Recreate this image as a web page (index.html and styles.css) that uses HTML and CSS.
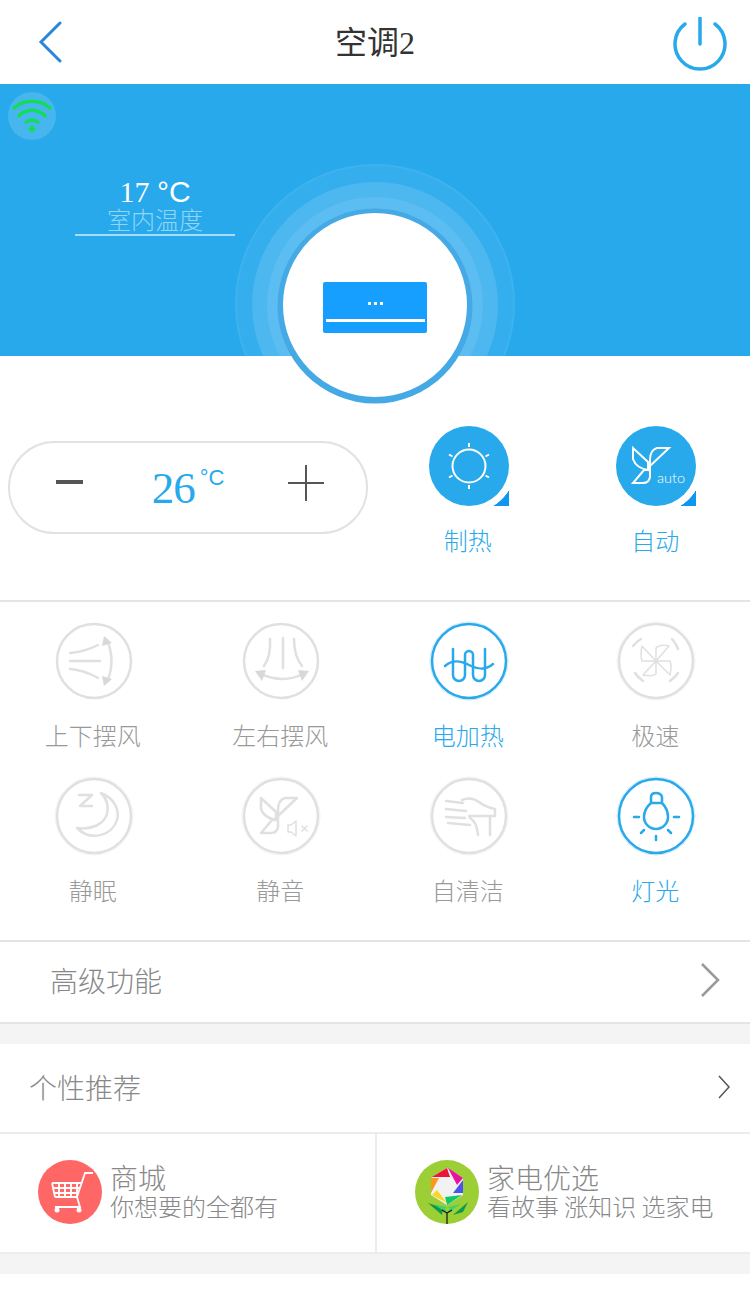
FILE: index.html
```html
<!DOCTYPE html>
<html lang="en">
<head>
  <meta charset="UTF-8">
  <title>空调2</title>
  <link rel="stylesheet" href="styles.css">
</head>
<body>
  <header class="topbar">
    <svg class="back" viewBox="0 0 24 44"><path d="M22 3 3 22l19 19"/></svg>
    <h1>空调<span class="num">2</span></h1>
    <svg class="power" viewBox="0 0 54 54"><path d="M12 7A25 25 0 1 0 42 7M27 1v26"/></svg>
  </header>

  <section class="hero">
    <div class="rings">
      <div class="ring ring-1"></div>
      <div class="ring ring-2"></div>
      <div class="ring ring-3"></div>
    </div>
    <div class="wifi">
      <svg viewBox="0 0 48 48"><path d="M5 17a27 27 0 0 1 38 0M10 25a18 18 0 0 1 28 0M17 31a10 10 0 0 1 14 0"/><path class="wifi-dot" d="m24 33 4 4-4 4-4-4z"/></svg>
    </div>
    <div class="indoor">
      <div class="indoor-temp">17 <span class="deg">°C</span></div>
      <div class="indoor-label">室内温度</div>
    </div>
    <div class="dial">
      <div class="unit">
        <div class="unit-dots"><i></i><i></i><i></i></div>
        <div class="unit-slot"></div>
      </div>
    </div>
  </section>

  <section class="controls">
    <div class="stepper">
      <span class="minus"></span>
      <div class="set-temp">26<sup>°C</sup></div>
      <span class="plus"></span>
    </div>
    <div class="mode">
      <div class="mode-btn">
        <svg viewBox="0 0 80 80">
          <circle class="line" cx="40" cy="40" r="16.5"/>
          <path class="line" d="M40 17v4M40 59v4M20 28.500l3.500 2M56.500 49.500l3.500 2M20 51.500l3.500-2M56.500 30.500l3.500-2"/>
        </svg>
      </div>
      <div class="mode-label">制热</div>
    </div>
    <div class="mode">
      <div class="mode-btn">
        <svg viewBox="0 0 80 80">
          <path class="line" d="M17 22v11q3 9 15 11V36zM53 22H41q-7 2-7 12v6zM34 34v17q-1 6-7 6H17l11-13h4"/>
          <text class="auto" x="41" y="57">auto</text>
        </svg>
      </div>
      <div class="mode-label">自动</div>
    </div>
  </section>

  <section class="features">
    <div class="feature">
      <svg viewBox="0 0 80 80">
        <circle cx="40" cy="40" r="37"/>
        <path d="M16 32q14-1 28-8M16 40h30M16 48q14 1 28 9M53 19q9 21 0 42"/>
        <path class="solid" d="m50 15 8 7-10 3zM50 65l8-7-10-3z"/>
      </svg>
      <div class="feature-label">上下摆风</div>
    </div>
    <div class="feature">
      <svg viewBox="0 0 80 80">
        <circle cx="40" cy="40" r="37"/>
        <path d="M42 17v30M29 18q1 17-6 27M53 18q0 17 8 27M20 53q22 10 42 0"/>
        <path class="solid" d="m14 50 11-1-4 11zM68 50l-11-1 4 11z"/>
      </svg>
      <div class="feature-label">左右摆风</div>
    </div>
    <div class="feature on">
      <svg viewBox="0 0 80 80">
        <circle class="halo" cx="40" cy="40" r="39"/>
        <circle cx="40" cy="40" r="37"/>
        <path d="M24 28v26a6 6 0 0 0 12 0V34a4 4 0 0 1 8 0v20a6 6 0 0 0 12 0V28M16 45c8-7 16-5 24-1s16 6 24-1"/>
      </svg>
      <div class="feature-label">电加热</div>
    </div>
    <div class="feature">
      <svg viewBox="0 0 80 80">
        <circle class="halo" cx="40" cy="40" r="39"/>
        <circle cx="40" cy="40" r="37"/>
        <path d="M17 25a28 28 0 0 1 8-7M56 18a28 28 0 0 1 6 10M19 52a28 28 0 0 0 8 8M62 52a28 28 0 0 1-8 8"/>
        <path class="thin" d="M40 40 26 25q-2 9 0 15zM40 40l13-15q-9-2-13 2zM40 40l14 14q2-9 0-14zM40 40 27 54q9 2 13-1z"/>
      </svg>
      <div class="feature-label">极速</div>
    </div>
    <div class="feature">
      <svg viewBox="0 0 80 80">
        <circle class="halo" cx="40" cy="40" r="39"/>
        <circle cx="40" cy="40" r="37"/>
        <path d="M47 17c13 5 19 17 16 27-4 14-25 23-40 8 15 2 27-4 30-14 2-8 0-15-6-21zM25 19h13L26 30h12"/>
      </svg>
      <div class="feature-label">静眠</div>
    </div>
    <div class="feature">
      <svg viewBox="0 0 80 80">
        <circle class="halo" cx="40" cy="40" r="39"/>
        <circle cx="40" cy="40" r="37"/>
        <path d="M20 22v11q3 9 15 11V36zM56 22H44q-7 2-7 12v6zM37 34v17q-1 6-7 6H20l11-13h4"/>
        <path class="thin" d="M47 49h3l5-4v15l-5-4h-3zM61 50l5 5m0-5-5 5"/>
      </svg>
      <div class="feature-label">静音</div>
    </div>
    <div class="feature">
      <svg viewBox="0 0 80 80">
        <circle class="halo" cx="40" cy="40" r="39"/>
        <circle cx="40" cy="40" r="37"/>
        <path d="M17 25l17 2M17 33l20 2M17 41l19 1M19 47l22 2M33 24q9-4 17 2 6 5 16 7v7H40M61 41v18M41 42q7 4 8 17"/>
      </svg>
      <div class="feature-label">自清洁</div>
    </div>
    <div class="feature on">
      <svg viewBox="0 0 80 80">
        <circle class="halo" cx="40" cy="40" r="39"/>
        <circle cx="40" cy="40" r="37"/>
        <path d="M35 27v-6q0-4 5-4t6 4v6M35 27h11M35 27q-7 6-7 14a12 12 0 0 0 24 0q0-8-6-14M18 41h5M58 41h5M25 57l3-3M52 54l3 3M40 60v4"/>
      </svg>
      <div class="feature-label">灯光</div>
    </div>
  </section>

  <div class="advanced">
    <span>高级功能</span>
    <svg class="chevron" viewBox="0 0 20 36"><path d="m2 2 16 16L2 34"/></svg>
  </div>

  <div class="band"></div>

  <div class="recommend">
    <span>个性推荐</span>
    <svg class="chevron small" viewBox="0 0 14 24"><path d="m2 1 10 11L2 23"/></svg>
  </div>

  <section class="links">
    <div class="link">
      <svg class="link-icon" viewBox="0 0 64 64">
        <circle class="cart-bg" cx="32" cy="32" r="32"/>
        <path class="cart" d="M55 13h-8l-8 24 3 10H17M14 23h29M17 37h23M14 23l3 14M21 23v14M27 23v14M33 23v14M39 23v14M15 28h27M16 33h25"/>
        <circle class="cart-wheel" cx="19" cy="50" r="2.500"/>
        <circle class="cart-wheel" cx="41" cy="50" r="2.500"/>
      </svg>
      <div class="link-text">
        <div class="link-title">商城</div>
        <div class="link-sub">你想要的全都有</div>
      </div>
    </div>
    <div class="link">
      <svg class="link-icon" viewBox="0 0 64 64">
        <circle fill="#9ccf35" cx="32" cy="32" r="32"/>
        <path fill="#f2f2f2" d="m32 8 16 10v17l-16 10-16-10V18z"/>
        <path fill="#f0123c" d="m17 17 15-9 3 9z"/>
        <path fill="#e912a0" d="m33 8 15 10-6 7z"/>
        <path fill="#4a55f0" d="M48 20v13H38z"/>
        <path fill="#10c86a" d="m30 37 17-2-15 10z"/>
        <path fill="#f8d820" d="m22 30 10 13-15-8z"/>
        <path fill="#f89a20" d="M16 18h8l-8 15z"/>
        <path fill="#0f9a48" d="m13 43 15 5-1 7z"/>
        <path fill="#0f9a48" d="m53 42-15 13 10-3z"/>
        <path fill="#3fd070" d="m18 44 14 9 3-5zM46 44l-14 9-2-5z"/>
        <path class="stem" d="M32 64V53l-5-3m5 3 5-3"/>
      </svg>
      <div class="link-text">
        <div class="link-title">家电优选</div>
        <div class="link-sub">看故事 涨知识 选家电</div>
      </div>
    </div>
  </section>

  <div class="band"></div>
</body>
</html>
```

FILE: styles.css
```css
body {
  margin: 0;
  background: #fff;
  font-family: "Noto Sans CJK SC", "Noto Sans", sans-serif;
  font-weight: 300;
  overflow: hidden;
}

svg {
  display: block;
}

/* top bar */
.topbar {
  height: 84px;
  display: grid;
  grid-template-columns: 1fr auto 1fr;
  align-items: center;
  padding: 0 23px;
}

.topbar h1 {
  margin: 0 0 4px;
  font-size: 32px;
  font-weight: 400;
  color: #333;
}

.num {
  font-family: "Liberation Serif", serif;
}

.back {
  margin-left: 15px;
  width: 24px;
  height: 44px;
  fill: none;
  stroke: #2a86d8;
  stroke-width: 3;
  stroke-linecap: round;
}

.power {
  justify-self: end;
  width: 54px;
  height: 54px;
  margin-top: 4px;
  fill: none;
  stroke: #27a9ec;
  stroke-width: 3.500;
  stroke-linecap: round;
}

/* blue panel */
.hero {
  position: relative;
  height: 272px;
  background: #27a9ec;
}

.rings {
  position: absolute;
  inset: 0;
  overflow: hidden;
}

.ring {
  position: absolute;
  border-radius: 50%;
}

.ring-1 {
  left: 235px;
  top: 80px;
  width: 276px;
  height: 276px;
  background: #34aeed;
  border: 2px solid #3fb2ee;
}

.ring-2 {
  left: 252px;
  top: 98px;
  width: 246px;
  height: 246px;
  background: #4db7ef;
}

.ring-3 {
  left: 267px;
  top: 113px;
  width: 216px;
  height: 216px;
  background: #5bbdf1;
}

.wifi {
  position: absolute;
  left: 8px;
  top: 8px;
  width: 48px;
  height: 48px;
  border-radius: 50%;
  background: #48b6ee;
}

.wifi svg {
  width: 48px;
  height: 48px;
  fill: none;
  stroke: #14dc5a;
  stroke-width: 3.500;
}

.wifi-dot {
  fill: #14dc5a;
  stroke: none;
}

.indoor {
  position: absolute;
  left: 75px;
  top: 90px;
  width: 160px;
  height: 60px;
  border-bottom: 2px solid #a5dcf7;
  text-align: center;
}

.indoor-temp {
  font-family: "Liberation Serif", serif;
  font-size: 30px;
  line-height: 36px;
  color: #fff;
}

.deg {
  font-family: "Liberation Sans", sans-serif;
}

.indoor-label {
  margin-top: -4px;
  font-size: 24px;
  line-height: 26px;
  color: #93d5f6;
}

.dial {
  position: absolute;
  z-index: 2;
  left: 283px;
  top: 129px;
  width: 184px;
  height: 184px;
  border-radius: 50%;
  background: #fff;
  box-shadow: 0 1px 0 5.500px #44a9e4;
  display: flex;
  align-items: center;
  justify-content: center;
}

.unit {
  width: 104px;
  height: 51px;
  margin-top: 5px;
  border-radius: 2px;
  background: #169fff;
  display: flex;
  flex-direction: column;
  align-items: center;
}

.unit-dots {
  display: flex;
  gap: 3px;
  margin-top: 20px;
}

.unit-dots i {
  width: 3px;
  height: 3px;
  background: #fff;
}

.unit-slot {
  width: 99px;
  height: 3px;
  margin-top: 14px;
  background: #fff;
}

/* temperature and mode */
.controls {
  height: 244px;
  display: grid;
  grid-template-columns: 375px 187.5px 187.5px;
  border-bottom: 2px solid #e4e4e4;
}

.stepper {
  position: relative;
  margin: 85px 0 0 8px;
  width: 360px;
  height: 93px;
  box-sizing: border-box;
  border: 2px solid #e2e2e2;
  border-radius: 47px;
  text-align: center;
}

.minus {
  position: absolute;
  left: 46px;
  top: 37px;
  width: 27px;
  height: 4px;
  background: #555;
}

.plus {
  position: absolute;
  left: 278px;
  top: 22px;
  width: 36px;
  height: 36px;
  background:
    linear-gradient(#555, #555) center / 36px 2px no-repeat,
    linear-gradient(#555, #555) center / 2px 36px no-repeat;
}

.set-temp {
  font-family: "Liberation Serif", serif;
  font-weight: 400;
  font-size: 45px;
  letter-spacing: -1px;
  line-height: 90px;
  color: #27a9ec;
}

.set-temp sup {
  font-family: "Liberation Sans", sans-serif;
  font-size: 22px;
  letter-spacing: 0;
  line-height: 0;
  vertical-align: 18px;
  margin-left: 5px;
}

.mode {
  padding-top: 70px;
  display: flex;
  flex-direction: column;
  align-items: center;
}

.mode-btn {
  position: relative;
  width: 80px;
  height: 80px;
  border-radius: 50%;
  background: #27a9ec;
}

/* little corner tab on the mode buttons */
.mode-btn::after {
  content: "";
  position: absolute;
  right: 0;
  bottom: 0;
  width: 17px;
  height: 17px;
  background: radial-gradient(circle at -23px -23px, transparent 46.500px, #0e96f0 47px);
}

.mode-btn svg {
  width: 80px;
  height: 80px;
}

.line {
  fill: none;
  stroke: #fff;
  stroke-width: 2;
}

.auto {
  fill: #fff;
  font-family: "Lato", sans-serif;
  font-size: 14.500px;
  font-weight: 300;
}

.mode-label {
  margin-top: 17px;
  padding-right: 2px;
  font-size: 24px;
  line-height: 34px;
  color: #27a9ec;
}

/* feature grid */
.features {
  display: grid;
  grid-template-columns: repeat(4, 187.5px);
  grid-auto-rows: 155px;
  height: 319px;
  padding-top: 19px;
  border-bottom: 2px solid #e4e4e4;
}

.feature {
  display: flex;
  flex-direction: column;
  align-items: center;
}

.feature svg {
  width: 80px;
  height: 80px;
  fill: none;
  stroke: #e0e0e0;
  stroke-width: 2.500;
  stroke-linecap: round;
  stroke-linejoin: round;
}

.feature .halo {
  stroke: #f4f4f4;
  stroke-width: 1;
}

.feature .solid {
  fill: #d8d8d8;
  stroke: none;
}

.feature .thin {
  stroke-width: 1.500;
}

.feature-label {
  margin-top: 17px;
  padding-right: 2px;
  font-size: 24px;
  line-height: 34px;
  color: #999;
}

.feature.on svg {
  stroke: #27a9ec;
}

.feature.on .halo {
  stroke: #cfeafa;
}

.feature.on .feature-label {
  color: #27a9ec;
}

/* list rows */
.advanced {
  height: 76px;
  display: flex;
  align-items: center;
  justify-content: space-between;
  padding: 0 30px 4px 50px;
  font-size: 28px;
  color: #888;
  border-bottom: 2px solid #e4e4e4;
}

.chevron {
  width: 20px;
  height: 36px;
  fill: none;
  stroke: #999;
  stroke-width: 2.500;
}

.chevron.small {
  width: 14px;
  height: 24px;
  stroke: #555;
  stroke-width: 1.500;
}

.band {
  height: 20px;
  background: #f4f4f4;
}

.recommend {
  height: 86px;
  display: flex;
  align-items: center;
  justify-content: space-between;
  padding: 0 19px 2px 29px;
  font-size: 28px;
  color: #888;
  border-bottom: 2px solid #ececec;
}

.links {
  height: 118px;
  display: grid;
  grid-template-columns: 375px 375px;
  border-bottom: 2px solid #ececec;
}

.link {
  display: flex;
  align-items: center;
  gap: 8px;
  padding: 0 0 2px 38px;
}

.link + .link {
  border-left: 2px solid #ececec;
  padding-left: 38px;
}

.link-icon {
  width: 64px;
  height: 64px;
  flex: none;
}

.cart-bg {
  fill: #ff6666;
}

.cart {
  fill: none;
  stroke: #fff;
  stroke-width: 1.800;
}

.cart-wheel {
  fill: #fff;
}

.stem {
  fill: none;
  stroke: #111;
  stroke-width: 1.200;
}

.link-text {
  margin-top: -2px;
  color: #888;
}

.link-title {
  font-size: 28px;
  line-height: 30px;
}

.link-sub {
  font-size: 24px;
  line-height: 28px;
}
```
